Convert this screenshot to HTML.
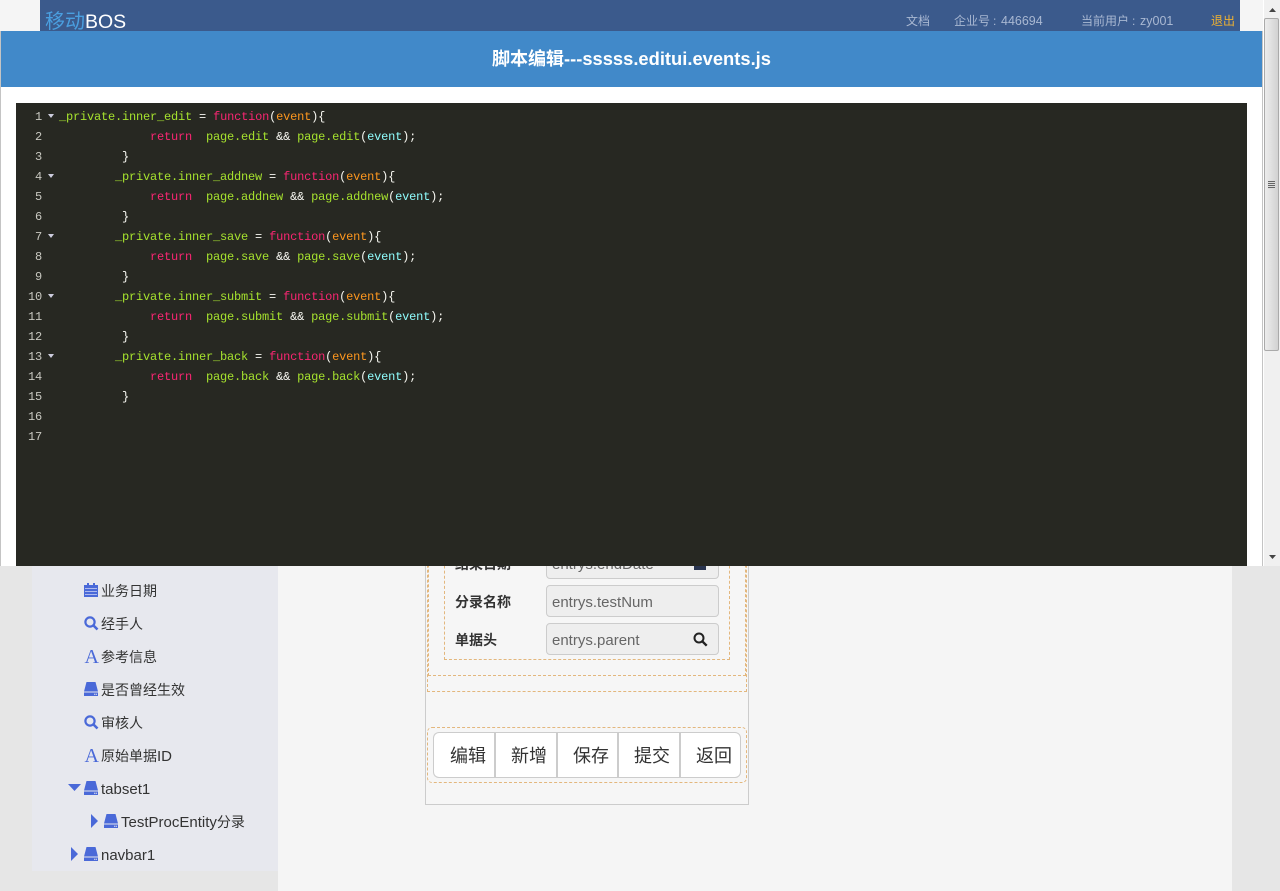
<!DOCTYPE html>
<html><head><meta charset="utf-8">
<style>
html,body{margin:0;padding:0;width:1280px;height:891px;overflow:hidden;background:#e6e6e6}
body{position:relative;font-family:"Liberation Sans","Noto Sans CJK SC",sans-serif}
.a{position:absolute;box-sizing:border-box}
.t{position:absolute;white-space:nowrap}
.h{position:absolute;white-space:nowrap;top:13px;font-size:12px;line-height:17px;color:#a9b8d2}
.h i{font-style:normal;font-size:12.5px}
.l{position:absolute;left:59px;height:20px;line-height:20px;white-space:pre;font:12px/20px "Liberation Mono","WenQuanYi Zen Hei",monospace;letter-spacing:-.2px;color:#f8f8f2}
.n{position:absolute;left:16px;width:26px;text-align:right;font:12px/20px "Liberation Mono",monospace;letter-spacing:-.2px;color:#c8c8c0}
.g{color:#a6e22e}.p{color:#f92672}.o{color:#fd971f}.c{color:#8ffcfc}
.f{position:absolute;left:48px;width:0;height:0;border-left:3px solid transparent;border-right:3px solid transparent;border-top:4px solid #ccd}
.s{position:absolute;font-size:14px;line-height:20px;color:#333;white-space:nowrap}
.s i{font-style:normal;font-size:15px}
.i{position:absolute}
.b{position:absolute;top:732px;height:46px;box-sizing:border-box;background:#fff;border:1px solid #ccc;border-right:0;font-size:18px;line-height:46px;color:#333;text-align:right}
.d{position:absolute;box-sizing:border-box;border:1px dashed #e3b77d}
.in{position:absolute;left:546px;width:173px;box-sizing:border-box;background:#eee;border:1px solid #ccc;border-radius:4px;font-size:15px;color:#666;padding-left:5px;line-height:33px;overflow:hidden}
.lb{position:absolute;left:455px;font-size:14px;line-height:20px;font-weight:bold;color:#333;white-space:nowrap}
</style></head>
<body>
<!-- page background -->
<div class="a" style="left:0;top:0;width:1280px;height:31px;background:#f5f5f5"></div>
<div class="a" style="left:40px;top:0;width:1200px;height:31px;background:#3b5a8c"></div>
<div class="t" style="left:45px;top:9px;font-size:20px;line-height:26px;color:#4a9fe0">移动<span style="color:#fff;font-size:19.5px">BOS</span></div>
<div class="h" style="left:906px">文档</div>
<div class="h" style="left:954px">企业号</div>
<div class="h" style="left:993px">:</div>
<div class="h" style="left:1001px"><i>446694</i></div>
<div class="h" style="left:1081px">当前用户</div>
<div class="h" style="left:1132px">:</div>
<div class="h" style="left:1140px"><i>zy001</i></div>
<div class="h" style="left:1211px;color:#f0b232">退出</div>

<div class="a" style="left:0;top:566px;width:278px;height:325px;background:#e6e6e6"></div>
<div class="a" style="left:32px;top:566px;width:246px;height:305px;background:#e7e8ee"></div>
<div class="a" style="left:278px;top:566px;width:954px;height:325px;background:#f5f5f5"></div>
<div class="a" style="left:1232px;top:566px;width:48px;height:325px;background:#e6e6e6"></div>

<!-- tree -->
<svg class="i" style="left:84px;top:583px" width="14" height="14" viewBox="0 0 14 14"><path fill="#4a69d8" d="M0 2h3V0h2v2h4V0h2v2h3v12H0z"/><path fill="#aeb9ee" d="M1 5h12v1H1zM1 8h12v1H1zM1 11h12v1H1z"/></svg>
<div class="s" style="left:101px;top:581px">业务日期</div>
<svg class="i" style="left:84px;top:616px" width="15" height="15" viewBox="0 0 15 15"><circle cx="6" cy="6" r="4.6" fill="none" stroke="#4a69d8" stroke-width="2.2"/><path d="M9.5 9.5l4 4" stroke="#4a69d8" stroke-width="2.6"/></svg>
<div class="s" style="left:101px;top:614px">经手人</div>
<div class="t" style="left:84.500px;top:645px;font:20px/24px 'Liberation Serif',serif;color:#4a69d8">A</div>
<div class="s" style="left:101px;top:647px">参考信息</div>
<svg class="i" style="left:84px;top:682px" width="14" height="14" viewBox="0 0 14 14"><path fill="#4a69d8" d="M2.500 0h9L14 9.500H0zM0 10.500h14V14H0z"/><path fill="#e7e8ee" d="M10 11.800h1.500v1H10zM12 11.800h1v1h-1z"/></svg>
<div class="s" style="left:101px;top:680px">是否曾经生效</div>
<svg class="i" style="left:84px;top:715px" width="15" height="15" viewBox="0 0 15 15"><circle cx="6" cy="6" r="4.600" fill="none" stroke="#4a69d8" stroke-width="2.200"/><path d="M9.500 9.500l4 4" stroke="#4a69d8" stroke-width="2.600"/></svg>
<div class="s" style="left:101px;top:713px">审核人</div>
<div class="t" style="left:84.500px;top:744px;font:20px/24px 'Liberation Serif',serif;color:#4a69d8">A</div>
<div class="s" style="left:101px;top:746px">原始单据<i>ID</i></div>
<svg class="i" style="left:68px;top:784px" width="13" height="8" viewBox="0 0 13 8"><path fill="#4a69d8" d="M0 0h13L6.500 7z"/></svg>
<svg class="i" style="left:84px;top:781px" width="14" height="14" viewBox="0 0 14 14"><path fill="#4a69d8" d="M2.500 0h9L14 9.500H0zM0 10.500h14V14H0z"/><path fill="#e7e8ee" d="M10 11.800h1.500v1H10zM12 11.800h1v1h-1z"/></svg>
<div class="s" style="left:101px;top:779px"><i>tabset1</i></div>
<svg class="i" style="left:91px;top:814px" width="8" height="14" viewBox="0 0 8 14"><path fill="#4a69d8" d="M0 0l7 7-7 7z"/></svg>
<svg class="i" style="left:104px;top:814px" width="14" height="14" viewBox="0 0 14 14"><path fill="#4a69d8" d="M2.500 0h9L14 9.500H0zM0 10.500h14V14H0z"/><path fill="#e7e8ee" d="M10 11.800h1.500v1H10zM12 11.800h1v1h-1z"/></svg>
<div class="s" style="left:121px;top:812px"><i>TestProcEntity</i>分录</div>
<svg class="i" style="left:71px;top:847px" width="8" height="14" viewBox="0 0 8 14"><path fill="#4a69d8" d="M0 0l7 7-7 7z"/></svg>
<svg class="i" style="left:84px;top:847px" width="14" height="14" viewBox="0 0 14 14"><path fill="#4a69d8" d="M2.500 0h9L14 9.500H0zM0 10.500h14V14H0z"/><path fill="#e7e8ee" d="M10 11.800h1.500v1H10zM12 11.800h1v1h-1z"/></svg>
<div class="s" style="left:101px;top:845px"><i>navbar1</i></div>

<!-- form -->
<div class="a" style="left:425px;top:540px;width:324px;height:265px;border:1px solid #ccc;background:#f6f6f6"></div>
<div class="d" style="left:427px;top:530px;width:320px;height:162px"></div>
<div class="d" style="left:428px;top:530px;width:318px;height:146px"></div>
<div class="d" style="left:444px;top:530px;width:286px;height:130px"></div>
<div class="in" style="top:547px;height:32px">entrys.endDate</div>
<div class="lb" style="top:554px">结束日期</div>
<div class="a" style="left:694px;top:558px;width:12px;height:12px;background:#2a3550"></div>
<div class="lb" style="top:592px">分录名称</div>
<div class="in" style="top:585px;height:32px">entrys.testNum</div>
<div class="lb" style="top:630px">单据头</div>
<div class="in" style="top:623px;height:32px">entrys.parent</div>
<svg class="i" style="left:693px;top:632px" width="15" height="15" viewBox="0 0 15 15"><circle cx="6" cy="6" r="4.500" fill="none" stroke="#222" stroke-width="2"/><path d="M9.200 9.200l4.500 4.500" stroke="#222" stroke-width="2.400"/></svg>

<div class="d" style="left:427px;top:727px;width:320px;height:56px;border-radius:5px"></div>
<div class="b" style="left:433px;width:62px;border-radius:6px 0 0 6px;padding-right:9px">编辑</div>
<div class="b" style="left:494px;width:63px;border-left-width:2px;padding-right:10px">新增</div>
<div class="b" style="left:556px;width:62px;border-left-width:2px;padding-right:9px">保存</div>
<div class="b" style="left:617px;width:63px;border-left-width:2px;padding-right:10px">提交</div>
<div class="b" style="left:679px;width:62px;border-left-width:2px;border-right:1px solid #ccc;border-radius:0 6px 6px 0;padding-right:8px">返回</div>

<!-- modal -->
<div class="a" style="left:0;top:31px;width:1263px;height:535px;background:#fff;border-left:1px solid #c4c4c4;border-right:1px solid #c4c4c4"></div>
<div class="a" style="left:1px;top:31px;width:1261px;height:56px;background:#4189c9"></div>
<div class="t" style="left:492px;top:46px;font-size:18px;line-height:26px;font-weight:bold;color:#fff">脚本编辑<span style="font-size:18.350px">---sssss.editui.events.js</span></div>
<div class="a" style="left:16px;top:103px;width:1231px;height:463px;background:#272822"></div>

<div class="n" style="top:107px">1</div><div class="f" style="top:114px"></div>
<div class="l g" style="top:107px">_private.inner_edit <span style="color:#f8f8f2">=</span> <span class="p">function</span><span style="color:#f8f8f2">(</span><span class="o">event</span><span style="color:#f8f8f2">){</span></div>
<div class="n" style="top:127px">2</div>
<div class="l" style="top:127px">             <span class="p">return</span>  <span class="g">page.edit</span> &amp;&amp; <span class="g">page.edit</span>(<span class="c">event</span>);</div>
<div class="n" style="top:147px">3</div>
<div class="l" style="top:147px">         }</div>
<div class="n" style="top:167px">4</div><div class="f" style="top:174px"></div>
<div class="l g" style="top:167px">        _private.inner_addnew <span style="color:#f8f8f2">=</span> <span class="p">function</span><span style="color:#f8f8f2">(</span><span class="o">event</span><span style="color:#f8f8f2">){</span></div>
<div class="n" style="top:187px">5</div>
<div class="l" style="top:187px">             <span class="p">return</span>  <span class="g">page.addnew</span> &amp;&amp; <span class="g">page.addnew</span>(<span class="c">event</span>);</div>
<div class="n" style="top:207px">6</div>
<div class="l" style="top:207px">         }</div>
<div class="n" style="top:227px">7</div><div class="f" style="top:234px"></div>
<div class="l g" style="top:227px">        _private.inner_save <span style="color:#f8f8f2">=</span> <span class="p">function</span><span style="color:#f8f8f2">(</span><span class="o">event</span><span style="color:#f8f8f2">){</span></div>
<div class="n" style="top:247px">8</div>
<div class="l" style="top:247px">             <span class="p">return</span>  <span class="g">page.save</span> &amp;&amp; <span class="g">page.save</span>(<span class="c">event</span>);</div>
<div class="n" style="top:267px">9</div>
<div class="l" style="top:267px">         }</div>
<div class="n" style="top:287px">10</div><div class="f" style="top:294px"></div>
<div class="l g" style="top:287px">        _private.inner_submit <span style="color:#f8f8f2">=</span> <span class="p">function</span><span style="color:#f8f8f2">(</span><span class="o">event</span><span style="color:#f8f8f2">){</span></div>
<div class="n" style="top:307px">11</div>
<div class="l" style="top:307px">             <span class="p">return</span>  <span class="g">page.submit</span> &amp;&amp; <span class="g">page.submit</span>(<span class="c">event</span>);</div>
<div class="n" style="top:327px">12</div>
<div class="l" style="top:327px">         }</div>
<div class="n" style="top:347px">13</div><div class="f" style="top:354px"></div>
<div class="l g" style="top:347px">        _private.inner_back <span style="color:#f8f8f2">=</span> <span class="p">function</span><span style="color:#f8f8f2">(</span><span class="o">event</span><span style="color:#f8f8f2">){</span></div>
<div class="n" style="top:367px">14</div>
<div class="l" style="top:367px">             <span class="p">return</span>  <span class="g">page.back</span> &amp;&amp; <span class="g">page.back</span>(<span class="c">event</span>);</div>
<div class="n" style="top:387px">15</div>
<div class="l" style="top:387px">         }</div>
<div class="n" style="top:407px">16</div>
<div class="n" style="top:427px">17</div>

<!-- scrollbar -->
<div class="a" style="left:1263px;top:0;width:17px;height:566px;background:#f0f0f0;border-left:1px solid #fff"></div>
<svg class="i" style="left:1267px;top:6px" width="11" height="8" viewBox="0 0 11 8"><path fill="#444" d="M5.500 2L9 6H2z"/></svg>
<div class="a" style="left:1264px;top:18px;width:15px;height:333px;border:1px solid #aaa;border-radius:2px;background:linear-gradient(90deg,#ececec,#e2e2e2 40%,#d2d2d2)"></div>
<div class="a" style="left:1268px;top:181px;width:7px;height:8px;background:repeating-linear-gradient(180deg,#666 0,#666 1px,#ddd 1px,#ddd 2px)"></div>
<svg class="i" style="left:1267px;top:553px" width="11" height="8" viewBox="0 0 11 8"><path fill="#444" d="M2 2h7L5.500 6z"/></svg>
</body></html>
